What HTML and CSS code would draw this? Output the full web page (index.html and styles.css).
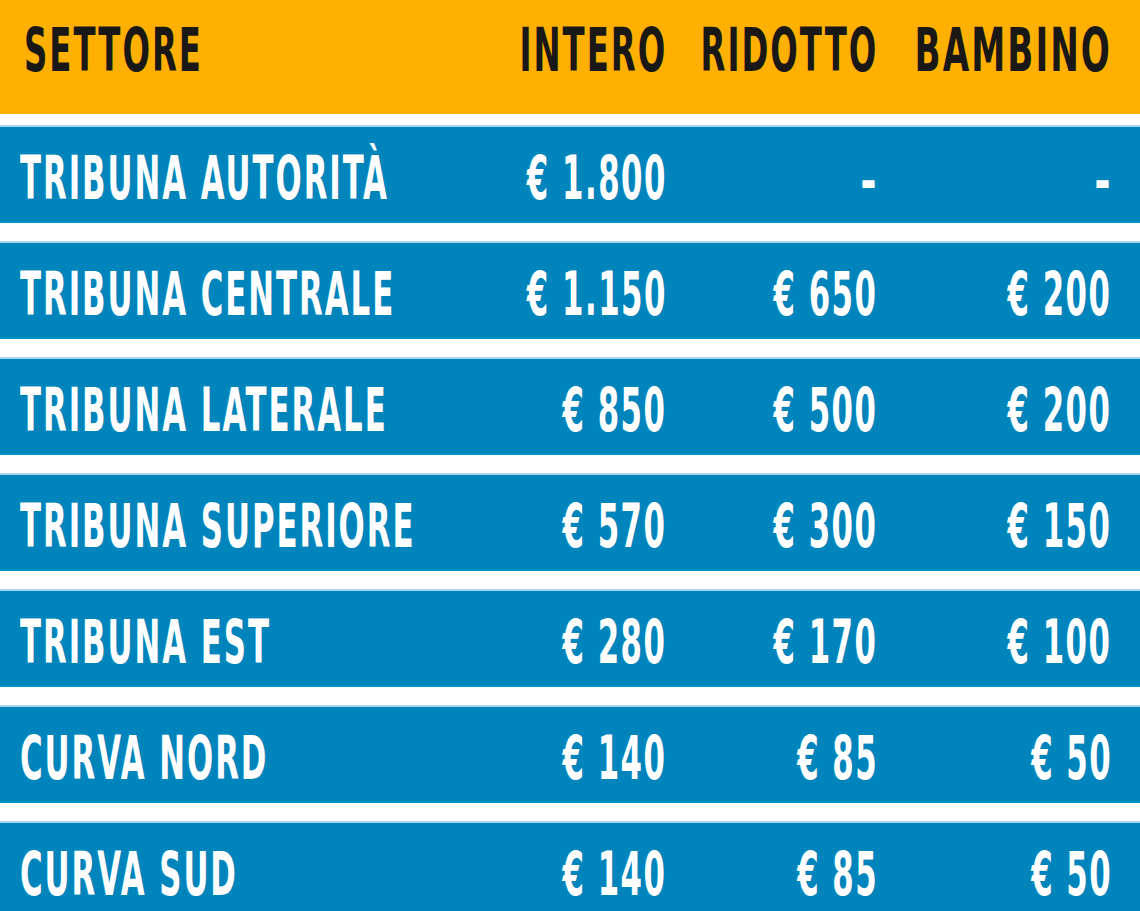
FILE: index.html
```html
<!DOCTYPE html>
<html lang="it">
<head>
<meta charset="utf-8">
<title>Prezzi settori</title>
<link rel="stylesheet" href="styles.css">
</head>
<body>
<div class="prices">
  <div class="row head">
    <div class="cell label"><span class="t">SETTORE</span></div>
    <div class="cell num"><span class="t">INTERO</span></div>
    <div class="cell num"><span class="t">RIDOTTO</span></div>
    <div class="cell num"><span class="t wide">BAMBINO</span></div>
  </div>
  <div class="row">
    <div class="cell label"><span class="t">TRIBUNA AUTORITÀ</span></div>
    <div class="cell num"><span class="t v">€ 1.800</span></div>
    <div class="cell num"><span class="t v dash">–</span></div>
    <div class="cell num"><span class="t v dash">–</span></div>
  </div>
  <div class="row">
    <div class="cell label"><span class="t">TRIBUNA CENTRALE</span></div>
    <div class="cell num"><span class="t v">€ 1.150</span></div>
    <div class="cell num"><span class="t v">€ 650</span></div>
    <div class="cell num"><span class="t v">€ 200</span></div>
  </div>
  <div class="row">
    <div class="cell label"><span class="t">TRIBUNA LATERALE</span></div>
    <div class="cell num"><span class="t v">€ 850</span></div>
    <div class="cell num"><span class="t v">€ 500</span></div>
    <div class="cell num"><span class="t v">€ 200</span></div>
  </div>
  <div class="row">
    <div class="cell label"><span class="t">TRIBUNA SUPERIORE</span></div>
    <div class="cell num"><span class="t v">€ 570</span></div>
    <div class="cell num"><span class="t v">€ 300</span></div>
    <div class="cell num"><span class="t v">€ 150</span></div>
  </div>
  <div class="row">
    <div class="cell label"><span class="t">TRIBUNA EST</span></div>
    <div class="cell num"><span class="t v">€ 280</span></div>
    <div class="cell num"><span class="t v">€ 170</span></div>
    <div class="cell num"><span class="t v">€ 100</span></div>
  </div>
  <div class="row">
    <div class="cell label"><span class="t">CURVA NORD</span></div>
    <div class="cell num"><span class="t v">€ 140</span></div>
    <div class="cell num"><span class="t v">€ 85</span></div>
    <div class="cell num"><span class="t v">€ 50</span></div>
  </div>
  <div class="row">
    <div class="cell label"><span class="t">CURVA SUD</span></div>
    <div class="cell num"><span class="t v">€ 140</span></div>
    <div class="cell num"><span class="t v">€ 85</span></div>
    <div class="cell num"><span class="t v">€ 50</span></div>
  </div>
</div>
</body>
</html>
```
FILE: styles.css
```css
html, body {
  margin: 0;
  padding: 0;
  background: #ffffff;
  overflow: hidden;
}
.prices {
  display: flex;
  flex-direction: column;
  gap: 18px;
  font-family: "DejaVu Sans Condensed", "DejaVu Sans", sans-serif;
  font-weight: bold;
  font-size: 60px;
}
.row {
  display: grid;
  grid-template-columns: minmax(0, 1fr) 200px 211px 234px;
  align-items: center;
  height: 98px;
  padding: 0 30px 0 20px;
  background: #0084bc;
  color: #ffffff;
  box-sizing: border-box;
  border-top: 2px solid #a9d6ec;
  border-bottom: 2px solid #0096c6;
  line-height: 1;
}
.row.head {
  height: 114px;
  margin-bottom: -7px;
  background: #ffb000;
  color: #1a1816;
  border: 0;
  padding-left: 24px;
}
.cell {
  display: flex;
  min-width: 0;
  white-space: nowrap;
  padding-top: 8px;
}
.head .cell {
  padding-top: 0;
  padding-bottom: 14px;
}
.label {
  justify-content: flex-start;
}
.num {
  justify-content: flex-end;
}
.t {
  display: inline-block;
  flex-shrink: 0;
  letter-spacing: 3.5px;
  transform: scaleX(0.57);
  transform-origin: left center;
}
.head .t {
  letter-spacing: 3.3px;
  transform: scaleX(0.6);
}
.head .t.wide {
  transform: scaleX(0.633);
}
.num .t {
  margin-right: -2px;
  transform-origin: right center;
}
.t.v {
  letter-spacing: 2.7px;
  transform: scaleX(0.57);
}
.t.dash {
  padding-top: 4px;
}
```
